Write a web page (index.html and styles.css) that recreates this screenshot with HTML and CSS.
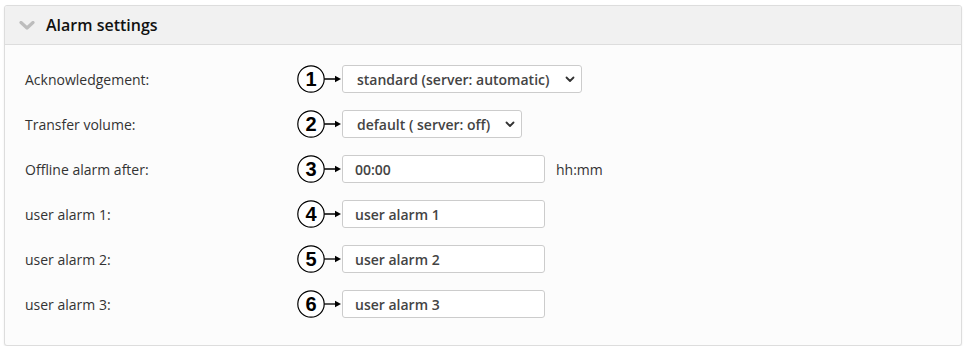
FILE: index.html
```html
<!DOCTYPE html>
<html>
<head>
<meta charset="utf-8">
<link rel="stylesheet" href="styles.css">
</head>
<body>
<section class="panel">
  <header class="panel-head">
    <svg class="chev" width="16" height="10" viewBox="0 0 16 10"><path d="M2 1.5 L8 7 L14 1.5" fill="none" stroke="#bdbdbd" stroke-width="3.2" stroke-linecap="round" stroke-linejoin="round"/></svg>
    <h2 class="panel-title">Alarm settings</h2>
  </header>
  <div class="panel-body">
    <div class="row">
      <label class="lbl">Acknowledgement:</label>
      <svg class="mark" width="46" height="30" viewBox="0 0 46 30"><circle cx="15" cy="15" r="13.2" fill="#fff" stroke="#000" stroke-width="1.2"/><text x="15" y="22" text-anchor="middle" class="num">1</text><line x1="28.2" y1="15" x2="40" y2="15" stroke="#000" stroke-width="1.3"/><path d="M39 11.8 L45 15 L39 18.2 Z" fill="#000"/></svg>
      <div class="sel w240"><select><option>standard (server: automatic)</option></select><svg class="caret" width="10" height="7" viewBox="0 0 10 7"><path d="M1.5 1.5 L5 5 L8.5 1.5" fill="none" stroke="#333" stroke-width="1.8" stroke-linecap="round" stroke-linejoin="round"/></svg></div>
    </div>
    <div class="row">
      <label class="lbl">Transfer volume:</label>
      <svg class="mark" width="46" height="30" viewBox="0 0 46 30"><circle cx="15" cy="15" r="13.2" fill="#fff" stroke="#000" stroke-width="1.2"/><text x="15" y="22" text-anchor="middle" class="num">2</text><line x1="28.2" y1="15" x2="40" y2="15" stroke="#000" stroke-width="1.3"/><path d="M39 11.8 L45 15 L39 18.2 Z" fill="#000"/></svg>
      <div class="sel w180"><select><option>default ( server: off)</option></select><svg class="caret" width="10" height="7" viewBox="0 0 10 7"><path d="M1.5 1.5 L5 5 L8.5 1.5" fill="none" stroke="#333" stroke-width="1.8" stroke-linecap="round" stroke-linejoin="round"/></svg></div>
    </div>
    <div class="row">
      <label class="lbl">Offline alarm after:</label>
      <svg class="mark" width="46" height="30" viewBox="0 0 46 30"><circle cx="15" cy="15" r="13.2" fill="#fff" stroke="#000" stroke-width="1.2"/><text x="15" y="22" text-anchor="middle" class="num">3</text><line x1="28.2" y1="15" x2="40" y2="15" stroke="#000" stroke-width="1.3"/><path d="M39 11.8 L45 15 L39 18.2 Z" fill="#000"/></svg>
      <input class="inp" type="text" value="00:00">
      <span class="unit">hh:mm</span>
    </div>
    <div class="row">
      <label class="lbl">user alarm 1:</label>
      <svg class="mark" width="46" height="30" viewBox="0 0 46 30"><circle cx="15" cy="15" r="13.2" fill="#fff" stroke="#000" stroke-width="1.2"/><text x="15" y="22" text-anchor="middle" class="num">4</text><line x1="28.2" y1="15" x2="40" y2="15" stroke="#000" stroke-width="1.3"/><path d="M39 11.8 L45 15 L39 18.2 Z" fill="#000"/></svg>
      <input class="inp" type="text" value="user alarm 1">
    </div>
    <div class="row">
      <label class="lbl">user alarm 2:</label>
      <svg class="mark" width="46" height="30" viewBox="0 0 46 30"><circle cx="15" cy="15" r="13.2" fill="#fff" stroke="#000" stroke-width="1.2"/><text x="15" y="22" text-anchor="middle" class="num">5</text><line x1="28.2" y1="15" x2="40" y2="15" stroke="#000" stroke-width="1.3"/><path d="M39 11.8 L45 15 L39 18.2 Z" fill="#000"/></svg>
      <input class="inp" type="text" value="user alarm 2">
    </div>
    <div class="row">
      <label class="lbl">user alarm 3:</label>
      <svg class="mark" width="46" height="30" viewBox="0 0 46 30"><circle cx="15" cy="15" r="13.2" fill="#fff" stroke="#000" stroke-width="1.2"/><text x="15" y="22" text-anchor="middle" class="num">6</text><line x1="28.2" y1="15" x2="40" y2="15" stroke="#000" stroke-width="1.3"/><path d="M39 11.8 L45 15 L39 18.2 Z" fill="#000"/></svg>
      <input class="inp" type="text" value="user alarm 3">
    </div>
  </div>
</section>
</body>
</html>
```

FILE: styles.css
```css
html, body {
  margin: 0;
  padding: 0;
  background: #fff;
}
body {
  padding: 5px 4px 0 4px;
  font-family: "Open Sans", "Liberation Sans", sans-serif;
  color: #333;
}
.panel {
  width: 958px;
  height: 341px;
  box-sizing: border-box;
  border: 1px solid #ddd;
  border-radius: 3px;
  background: #fcfcfc;
  box-shadow: 0 1px 2px rgba(0,0,0,0.08);
  overflow: hidden;
}
.panel-head {
  height: 38px;
  background: #f1f1f1;
  border-bottom: 1px solid #ddd;
  display: flex;
  align-items: center;
  padding-left: 14px;
}
.chev {
  display: block;
  margin-top: 1px;
}
.panel-title {
  margin: 0 0 0 11px;
  font-size: 16px;
  font-weight: 600;
  color: #111;
}
.panel-body {
  padding: 20px 0 0 20px;
  display: flex;
  flex-direction: column;
  gap: 17px;
}
.row {
  display: flex;
  align-items: center;
  height: 28px;
}
.lbl {
  width: 271px;
  font-size: 14px;
  color: #333;
}
.mark {
  display: block;
  flex: none;
}
.num {
  font-family: "Liberation Sans", Arial, sans-serif;
  font-weight: bold;
  font-size: 20px;
  fill: #000;
}
.sel {
  position: relative;
  height: 28px;
}
.sel select {
  appearance: none;
  -webkit-appearance: none;
  width: 100%;
  height: 28px;
  box-sizing: border-box;
  border: 1px solid #ccc;
  border-radius: 3px;
  background: #fff;
  padding: 0 0 0 14px;
  font-family: "Open Sans", sans-serif;
  font-size: 14px;
  font-weight: 600;
  color: #444;
}
.caret {
  position: absolute;
  right: 7px;
  top: 11px;
  pointer-events: none;
}
.w240 { width: 240px; }
.w180 { width: 180px; }
.inp {
  width: 203px;
  height: 28px;
  box-sizing: border-box;
  border: 1px solid #ccc;
  border-radius: 3px;
  background: #fff;
  padding: 0 0 0 12px;
  font-family: "Open Sans", sans-serif;
  font-size: 14px;
  font-weight: 600;
  color: #444;
  margin: 0;
}
.unit {
  margin-left: 11px;
  font-size: 14px;
  color: #333;
}
```
